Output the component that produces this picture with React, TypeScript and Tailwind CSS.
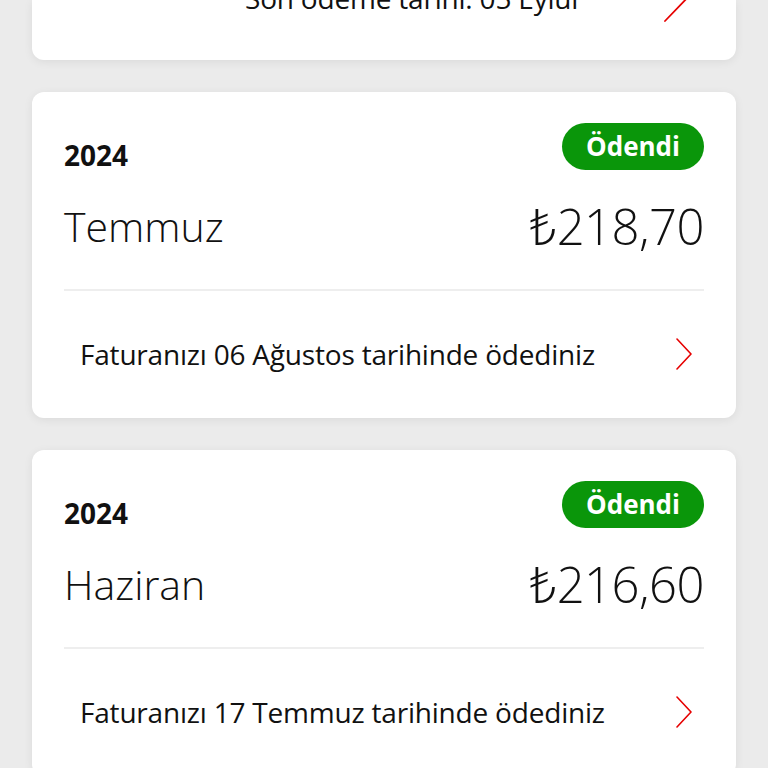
import React from 'react';

type Bill = {
  year: string;
  month: string;
  amount: string;
  paidText: string;
};

const bills: Bill[] = [
  { year: '2024', month: 'Temmuz', amount: '218,70', paidText: 'Faturanızı 06 Ağustos tarihinde ödediniz' },
  { year: '2024', month: 'Haziran', amount: '216,60', paidText: 'Faturanızı 17 Temmuz tarihinde ödediniz' },
];

const Chevron: React.FC<{ className?: string }> = ({ className }) => (
  <svg viewBox="0 0 16 32" className={className} fill="none">
    <path d="M1 1 L15 16 L1 31" stroke="#e60000" strokeWidth="1.6" strokeLinecap="round" strokeLinejoin="round" />
  </svg>
);

const BillCard: React.FC<{ bill: Bill }> = ({ bill }) => (
  <div className="bg-white rounded-xl shadow-[0_2px_10px_rgba(0,0,0,0.07)] px-8 h-[326px] shrink-0">
    {/* Header: year + status */}
    <div className="flex justify-between items-end pt-[31px]">
      <span className="text-[28px] font-bold leading-[30px] text-[#111]">{bill.year}</span>
      <span className="h-[47px] px-[24px] rounded-full bg-[#0a960a] text-white text-[26px] font-bold flex items-center">
        Ödendi
      </span>
    </div>

    {/* Month + amount */}
    <div className="flex justify-between items-center h-[72px] mt-[20px]">
      <span className="text-[41px] font-light text-[#111] leading-none">{bill.month}</span>
      <span className="text-[49px] font-light text-[#111] leading-none tracking-[-0.5px]">₺{bill.amount}</span>
    </div>

    <div className="mt-[27px] border-t-2 border-[#eeeeee]" />

    {/* Paid row */}
    <div className="flex justify-between items-center h-[130px] pl-4 pr-3 pb-[4px]">
      <span className="text-[28px] text-[#111] leading-none tracking-[-0.2px]">{bill.paidText}</span>
      <Chevron className="w-[16px] h-[32px]" />
    </div>
  </div>
);

export default function App() {
  return (
    <div
      className="w-[768px] h-[768px] overflow-hidden bg-[#ebebeb] flex flex-col gap-8 px-8"
      style={{ fontFamily: '"Open Sans", "Noto Sans", sans-serif' }}
    >
      {/* Previous card, scrolled mostly out of view */}
      <div className="bg-white rounded-b-xl shadow-[0_2px_10px_rgba(0,0,0,0.07)] h-[60px] shrink-0 overflow-hidden">
        <div className="flex items-center justify-between -mt-[22px] h-[40px] pl-[213px] pr-[44px]">
          <span className="text-[28px] text-[#111] leading-none tracking-[-0.2px]">Son ödeme tarihi: 05 Eylül</span>
          <svg viewBox="0 0 28 56" className="w-[28px] h-[56px] mt-[-8px]" fill="none">
            <path d="M1 1 L27 28 L1 55" stroke="#e60000" strokeWidth="1.8" strokeLinecap="round" strokeLinejoin="round" />
          </svg>
        </div>
      </div>

      {bills.map((b) => (
        <BillCard key={b.month} bill={b} />
      ))}
    </div>
  );
}
